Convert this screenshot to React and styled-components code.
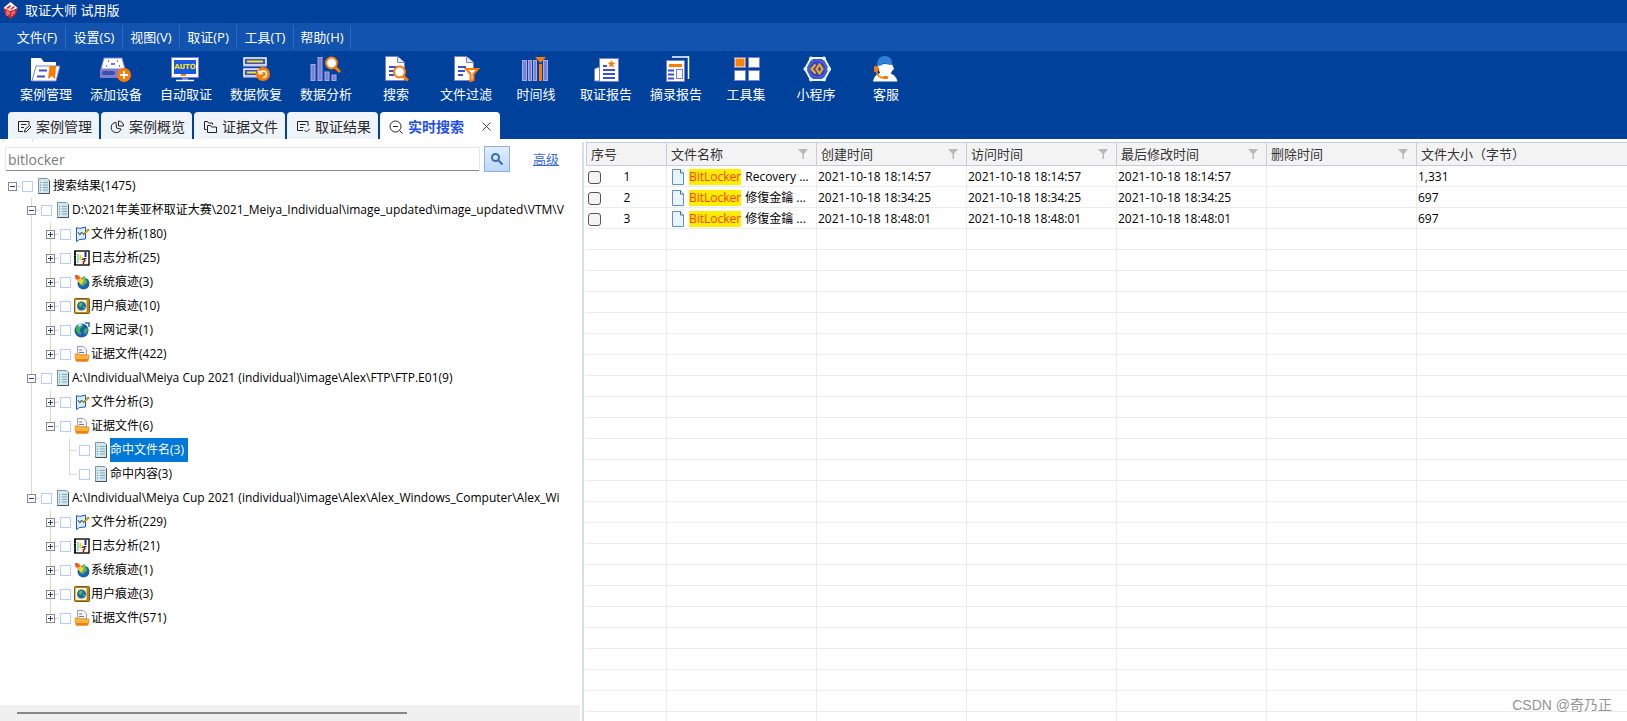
import React from "react";
import styled, { createGlobalStyle } from "styled-components";

const GlobalStyle = createGlobalStyle`
  * { box-sizing: border-box; }
  html, body { margin: 0; padding: 0; }
  body, button, input {
    font-family: "Open Sans", "Noto Sans CJK SC", sans-serif;
  }
  button { border: 0; padding: 0; background: none; color: inherit; cursor: pointer; }
  svg { display: block; flex: none; }
`;

const Shell = styled.div`
  display: flex;
  flex-direction: column;
  height: 100vh;
  overflow: hidden;
  background: #fff;
  color: #000;
`;

/* ---------- header ---------- */

const TitleBar = styled.header`
  display: flex;
  align-items: center;
  gap: 7px;
  flex: none;
  height: 23px;
  padding: 0 0 3px 3px;
  background: #00419c;
  color: #fff;
  font-size: 13px;
  line-height: 20px;
`;

const MenuBar = styled.nav`
  display: flex;
  flex: none;
  height: 28px;
  padding: 2px 0 2px 9px;
  background: #1153ae;
`;

const MenuItem = styled.button`
  width: 57px;
  flex: none;
  border-right: 1px solid #2b68be;
  color: #fff;
  font-size: 13px;
  line-height: 20px;
`;

const Ribbon = styled.div`
  display: flex;
  flex: none;
  height: 61px;
  padding: 4px 0 0 11px;
  background: #00419c;
`;

const RibbonButton = styled.button`
  display: flex;
  flex-direction: column;
  align-items: center;
  gap: 1px;
  width: 70px;
  flex: none;
  color: #fff;
  font-size: 13px;
  line-height: 20px;
`;

const TabStrip = styled.div`
  display: flex;
  gap: 2px;
  flex: none;
  height: 27px;
  padding-left: 8px;
  background: #00419c;
`;

const Tab = styled.div`
  display: flex;
  align-items: center;
  flex: none;
  width: ${(p) => (p.$active ? 120 : 91)}px;
  padding: 2px 9px 0;
  border-radius: 4px 4px 0 0;
  background: ${(p) => (p.$active ? "#fff" : "#eff3fa")};
  color: ${(p) => (p.$active ? "#1d4ff0" : "#2a2a2a")};
`;

const TabLabel = styled.button`
  display: flex;
  align-items: center;
  gap: 5px;
  flex: 1;
  font-size: 14px;
  line-height: 20px;
  font-weight: ${(p) => (p.$active ? 700 : 400)};
  white-space: nowrap;
`;

const IconButton = styled.button`
  display: flex;
`;

/* ---------- left pane ---------- */

const Main = styled.main`
  display: flex;
  flex: 1;
  min-height: 0;
`;

const SidePane = styled.aside`
  display: flex;
  flex-direction: column;
  flex: none;
  width: 580px;
  min-height: 0;
`;

const PaneTicks = styled.div`
  flex: none;
  width: 30px;
  height: 3px;
  margin-left: 3px;
  border: solid #d8dcec;
  border-width: 0 1px;
`;

const SearchBar = styled.form`
  display: flex;
  align-items: center;
  flex: none;
  height: 32px;
  padding: 2px 0 0 5px;
`;

const SearchInput = styled.input`
  width: 475px;
  height: 24px;
  padding: 0 2px;
  border: 1px solid #e6e6e6;
  border-bottom-color: #868686;
  border-radius: 2px;
  color: #7a7a7a;
  font-size: 14px;
  outline: none;
`;

const SearchButton = styled.button`
  display: flex;
  align-items: center;
  justify-content: center;
  width: 26px;
  height: 26px;
  margin: 0 23px 0 4px;
  border: 1px solid #8fb0da;
  background: linear-gradient(#e0edff, #bcd8fc);
`;

const AdvancedLink = styled.a`
  color: #3a6bd6;
  font-size: 13px;
  line-height: 20px;
`;

const Tree = styled.ul`
  flex: 1;
  min-height: 0;
  margin: 0;
  padding: 0 0 0 3px;
  overflow: hidden;
  list-style: none;
`;

const TreeRow = styled.li`
  display: flex;
  align-items: center;
  height: 24px;
  font-size: 12px;
  line-height: 24px;
  white-space: nowrap;
`;

const Guide = styled.span`
  flex: none;
  align-self: ${(p) => (p.$line === "half" ? "flex-start" : "stretch")};
  display: flex;
  align-items: ${(p) => (p.$line === "half" ? "flex-end" : "center")};
  width: 19px;
  height: ${(p) => (p.$line === "half" ? 13 : 24)}px;
  background: ${(p) =>
    p.$line ? "linear-gradient(#d9d9d9, #d9d9d9) 9px 0 / 1px 100% no-repeat" : "none"};
  &::after {
    content: "";
    width: ${(p) => (p.$stub ? 8 : 0)}px;
    height: 1px;
    margin-left: 9px;
    background: #d9d9d9;
  }
`;

const ToggleCell = styled.span`
  display: flex;
  align-items: center;
  flex: none;
  width: 19px;
  height: 24px;
  padding-left: 5px;
  background: ${(p) =>
    p.$line
      ? `linear-gradient(#d9d9d9, #d9d9d9) 9px 0 / 1px ${p.$line === "half" ? "50%" : "100%"} no-repeat`
      : "none"};
  &::after {
    content: "";
    width: 4px;
    height: 1px;
    background: #d9d9d9;
  }
`;

const Toggle = styled.button`
  width: 9px;
  height: 9px;
  flex: none;
  background: #fff;
`;

const TreeCheck = styled.input`
  appearance: none;
  flex: none;
  width: 11px;
  height: 11px;
  margin: 0 2px 0 0;
  border: 1px solid #b4ccff;
  background: #fff;
`;

const TreeLabel = styled.label`
  display: flex;
  align-items: center;
  gap: 1px;
`;

const NodeText = styled.span`
  padding-right: 4px;
  background: ${(p) => (p.$selected ? "#0078d7" : "transparent")};
  color: ${(p) => (p.$selected ? "#fff" : "#000")};
`;

const ScrollTrack = styled.div`
  flex: none;
  height: 16px;
  padding: 7px 173px 7px 17px;
  background: #f0f0f0;
`;

const ScrollThumb = styled.div`
  height: 2px;
  background: #888;
`;

const Divider = styled.div`
  flex: none;
  width: 2px;
  margin: 3px 2px 0;
  background: #d6deee;
`;

/* ---------- result table ---------- */

const TablePane = styled.section`
  flex: 1;
  min-width: 0;
  padding-top: 3px;
  overflow: hidden;
`;

const ResultTable = styled.table`
  width: 100%;
  table-layout: fixed;
  border-collapse: separate;
  border-spacing: 0;
`;

const Col = styled.col`
  width: ${(p) => p.$width};
`;

const HeadCell = styled.th`
  height: 24px;
  padding: 0 8px 1px 4px;
  border: solid #c9cbdd;
  border-width: 1px 1px 1px 0;
  background: #f3f3f3;
  color: #333;
  font-size: 13px;
  font-weight: 400;
  line-height: 20px;
  text-align: left;
  &:first-child { border-left-width: 1px; }
  &:last-child { border-right-width: 0; }
`;

const HeadContent = styled.div`
  display: flex;
  align-items: center;
  justify-content: space-between;
`;

const Cell = styled.td`
  height: 21px;
  padding: 2px 1px 0;
  border: solid #ececec;
  border-width: 0 1px 1px 0;
  font-size: 12px;
  line-height: 16px;
  white-space: nowrap;
  &:last-child { border-right-width: 0; }
`;

const IndexLabel = styled.label`
  display: flex;
  align-items: center;
  padding-left: 1px;
`;

const RowCheck = styled.input`
  appearance: none;
  width: 13px;
  height: 13px;
  margin: 0;
  border: 1px solid #555;
  border-radius: 3px;
  background: #f4f4f4;
`;

const RowNumber = styled.span`
  flex: 1;
  padding-right: 12px;
  text-align: center;
`;

const FileName = styled.div`
  display: flex;
  align-items: center;
  gap: 4px;
  padding-left: 3px;
`;

const Hit = styled.mark`
  background: #ffee00;
  color: #ff3a1c;
`;

const Watermark = styled.div`
  position: absolute;
  right: 15px;
  bottom: 5px;
  color: #949494;
  font-family: "Liberation Sans", "Noto Sans CJK SC", sans-serif;
  font-size: 14px;
  line-height: 22px;
`;

/* ---------- drawings ---------- */

const P = "#7b80d2";
const B = "#3b4fd0";
const O = "#ff7a00";

const Sheet = ({ x }) => (
  <g transform={`translate(${x} 0)`}>
    <path d="M.5 1.5h12l7 6v18h-19z" fill="#fff" stroke={P} />
    <path d="M12.5 1.5v6h7" fill="#e4e6fa" stroke={P} />
    <path d="M4 12h8M4 16h7M4 20h5" stroke={B} strokeWidth="2" />
  </g>
);

const ribbonArt = {
  case: (
    <>
      <path d="M1 26V3h10l3 4h12v6l-3 13z" fill="#fff" />
      <path d="M6 11h24l-4 15H2z" fill="#fff" stroke={P} />
      <path d="M9 15.5h8M7 21.5h8" stroke={B} strokeWidth="2" />
      <path d="M19.500 11h6.500l-1 13-3-3-4 3z" fill={O} />
    </>
  ),
  device: (
    <>
      <path d="M4 3h18l3 11H1z" fill="#fff" stroke={P} />
      <path d="M8 6h1M17 6h1M6 11h1M19 11h1M11 9h4" stroke={B} strokeWidth="1.500" />
      <rect x="0" y="14" width="25" height="9" fill={P} />
      <rect x="2" y="16" width="13" height="4" rx="2" fill="#3c4fae" />
      <circle cx="24" cy="20" r="7" fill={O} />
      <path d="M24 16v8M20 20h8" stroke="#fff" strokeWidth="2" />
    </>
  ),
  auto: (
    <>
      <rect x="1.500" y="2.500" width="27" height="20" fill="#fff" stroke={P} />
      <rect x="4" y="5" width="22" height="14" fill="#1758e6" />
      <text x="15" y="14" textAnchor="middle" fontSize="7" fontWeight="700" fontFamily="DejaVu Sans" fill="#ffe600">AUTO</text>
      <rect x="11" y="19" width="5" height="2" fill={O} />
      <path d="M12 23h6v2h-6z" fill={P} />
      <path d="M6 25.500h18" stroke="#fff" strokeWidth="1.500" />
    </>
  ),
  restore: (
    <>
      <rect x="4" y="3" width="22" height="7" fill={B} stroke="#fff" strokeWidth="1.500" />
      <path d="M7 6.500h16" stroke="#ffe600" strokeWidth="2" />
      <rect x="4" y="14" width="16" height="7" fill={B} stroke="#fff" strokeWidth="1.500" />
      <path d="M7 17.500h9" stroke="#ffe600" strokeWidth="2" />
      <path d="M3 11.500h24M3 22.500h14" stroke={P} />
      <circle cx="23" cy="19" r="7" fill={O} />
      <path d="M19.500 18.500c1-3.500 7-3.500 7 .500 0 2-1.500 3.500-3.500 3.500M18.500 15.500l1 3.500 3.500-1" fill="none" stroke="#fff" strokeWidth="1.500" />
    </>
  ),
  analyse: (
    <>
      <g fill={P} stroke="#a5a9e8">
        <rect x="1" y="9.500" width="4" height="16" />
        <rect x="8" y="2.500" width="4" height="23" />
        <rect x="15" y="17" width="4" height="8.500" />
        <rect x="22" y="20" width="4" height="5.500" />
      </g>
      <path d="M25 12l5 5" stroke={O} strokeWidth="3" />
      <circle cx="21.500" cy="8" r="5.500" fill="#fff" stroke={O} strokeWidth="2" />
    </>
  ),
  search: (
    <>
      <Sheet x={5} />
      <path d="M23 21l5 4.500" stroke={O} strokeWidth="3" />
      <circle cx="19.500" cy="17" r="5.500" fill="#fff" stroke={O} strokeWidth="2" />
    </>
  ),
  filter: (
    <>
      <Sheet x={4} />
      <path d="M16 14h12l-4.500 5v6l-3 1v-7z" fill="#fff" stroke={O} strokeWidth="2" />
    </>
  ),
  timeline: (
    <>
      <g fill={P} stroke="#a9adea">
        <rect x="2.500" y="5.500" width="4" height="20" />
        <rect x="8.500" y="5.500" width="3" height="20" />
        <rect x="13.500" y="5.500" width="3" height="20" />
        <rect x="23.500" y="5.500" width="4" height="20" />
      </g>
      <path d="M19 9h3v17h-3zM15 2h11l-5.500 6z" fill={O} />
    </>
  ),
  report: (
    <>
      <path d="M4.500 26V14l3-1.500H10V26z" fill="#fff" stroke={P} />
      <rect x="9.500" y="3.500" width="19" height="23" fill="#fff" stroke={P} />
      <path d="M21.500 5l1 2.500 3 .300-2.300 1.800.800 2.900-2.500-1.600-2.500 1.600.800-2.900-2.300-1.800 3-.300z" fill={O} />
      <path d="M13 11h4M13 15h12M13 19h12M13 23h12" stroke={B} strokeWidth="2" />
    </>
  ),
  excerpt: (
    <>
      <path d="M12 2h16.500v22" fill="none" stroke="#fff" strokeWidth="1.500" />
      <rect x="6.500" y="5.500" width="18" height="21" fill="#fff" stroke={P} />
      <rect x="9" y="9" width="13" height="3" fill={O} />
      <path d="M8 15.500h6M8 19.500h6M8 23.500h6" stroke={B} strokeWidth="2" />
      <rect x="16.500" y="14.500" width="6" height="9" fill="#f6f6ff" stroke={P} />
    </>
  ),
  tools: (
    <g fill="#fff" stroke={P}>
      <rect x="4.500" y="2.500" width="11" height="10" />
      <rect x="18.500" y="2.500" width="11" height="10" />
      <rect x="4.500" y="15.500" width="11" height="10" />
      <rect x="18.500" y="15.500" width="11" height="10" />
      <rect x="6" y="4" width="8" height="7" fill="#ff8400" stroke={O} />
    </g>
  ),
  mini: (
    <>
      <path d="M11 3h13l6 11-6 11H11L5 14z" fill={B} stroke="#eefaff" strokeWidth="2" />
      <g fill="#dff6ff">
        <circle cx="11" cy="3.500" r="2" /><circle cx="24" cy="3.500" r="2" />
        <circle cx="5.500" cy="14" r="2" /><circle cx="29" cy="14" r="2" />
        <circle cx="11" cy="24.500" r="2" /><circle cx="24" cy="24.500" r="2" />
      </g>
      <circle cx="17.500" cy="14" r="8.500" fill="#3347c8" stroke="#5a6be0" />
      <path d="M15.500 9.500L11.500 14l4 4.500M19.500 9.500l-3 4.500 3 4.500 3-4.500z" fill="none" stroke="#ffb000" strokeWidth="2" />
    </>
  ),
  service: (
    <>
      <path d="M3 26.500c1-6 5-8 8-8.500h8c4 1 7 3 8.500 8.500z" fill="#fff" />
      <path d="M8 9h14l2 5-2 2c-1 4-5 5-7 5-4 0-7-5-7-12z" fill="#fff" />
      <path d="M7 11C7 4 10 1 15 1s8 4 7 9c-4 0-6-1-8-2-1 2-3 3-7 3z" fill="#2f7fd6" />
      <rect x="4" y="11" width="4" height="6" rx="1" fill={O} />
      <path d="M6.500 17c1 4 4 6 8 6" fill="none" stroke={O} strokeWidth="1.500" />
      <rect x="13" y="21" width="5" height="3" rx="1" fill={O} />
    </>
  ),
};

const tabArt = {
  edit: <path d="M12 5V1.500H1.500v10H6M4 4.500h5.500M4 7.500h3M7.500 12l.500-2.500 4.500-4 1.500 1.500-4.500 4.500z" />,
  pie: <path d="M6 2.500A5 5 0 1 0 11 9L6.500 8zM8.500 1v5h5c0-3-2-5-5-5z" />,
  folders: <path d="M3.500 9.500h-2v-8h3l1 1.500h4v1.500M4.500 12.500v-7h3l1 1.500h5v5.500z" />,
  result: <path d="M12 6V1.500H1.500v9H7M4 4.500h5.500M4 7.500h3.500M8.500 10l2 2 3.500-3.500" />,
  zoom: (
    <>
      <circle cx="6.500" cy="6.500" r="5.500" />
      <path d="M10.500 10.500l3 3M4 6.500h5" />
    </>
  ),
};

const nodeArt = {
  doc: (
    <>
      <path d="M2.500.500h9l2 2v13h-11z" fill="#d0e6f0" stroke="#8097a5" />
      <path d="M13.500 2.500v13h-11" fill="none" stroke="#43535f" />
      <path d="M7 4.500h5M7 7h5M7 9.500h5M7 12h5" stroke="#88a8b8" />
      <path d="M4.500 4v9" stroke="#55a860" strokeDasharray="1 1.500" />
    </>
  ),
  file: (
    <>
      <path d="M2.500 1.500l3 1 6-1.500v12l-6 .500-3 2z" fill="#d8eeff" stroke="#1c5eb0" />
      <path d="M4 6l2 3 1.500-3 2 2.500L14 4" fill="none" stroke="#3a4a30" />
      <path d="M9 8l5-5 1.500 1L11 8z" fill="#e8b020" stroke="#7a4a10" strokeWidth=".500" />
    </>
  ),
  log: (
    <>
      <rect x="1" y="1" width="14" height="14" fill="#fffce8" stroke="#1c1a10" strokeWidth="1.500" />
      <path d="M1 1v14" stroke="#000" strokeWidth="2" strokeDasharray="1.500 1" />
      <path d="M4 4v9" stroke="#7fe0f0" strokeWidth="2" />
      <path d="M6.500 5v5" stroke="#f0d020" strokeWidth="2" />
      <path d="M11.500 2v5M11.500 8v1" stroke="#1028d0" strokeWidth="2" />
      <path d="M8.500 10c0-2 3.500-1 2 1l-1 1v2" fill="none" stroke="#901020" strokeWidth="1.500" />
    </>
  ),
  system: (
    <>
      <circle cx="9.500" cy="9.500" r="6" fill="#1b62b8" />
      <path d="M7 5c3-1 6 0 6 3 0 2-3 1-3 4-2 1-5-3-5-5z" fill="#58b840" />
      <path d="M1 1l3 0 3 3-3 3-3-3z" fill="#f0602a" />
      <path d="M3 6l4-2 3 3-3 4z" fill="#f4d030" />
      <path d="M8 3l3-1 1 3-3 1z" fill="#7cc848" />
    </>
  ),
  user: (
    <>
      <rect x=".500" y=".500" width="15" height="15" rx="1" fill="#b8861c" stroke="#7d5a10" />
      <rect x="1.500" y="2" width="11" height="12" fill="#fff6c8" />
      <circle cx="7.500" cy="8" r="4.500" fill="#1c64b4" />
      <path d="M5 6c2-2 4-1 4 0s-2 1-2 3c-1 0-3-1-2-3zM9 8l2 1-2 2z" fill="#58bc50" />
    </>
  ),
  web: (
    <>
      <circle cx="7.500" cy="8.500" r="7" fill="#1a5cb8" />
      <path d="M2 5c2-3 6-4 7-2s-3 2-3 5 2 2 1 5c-3-1-6-4-5-8zM10 7l4-1-1 5-3 1z" fill="#3fb254" />
      <path d="M4 3c2-2 4-1 4 0L5 5z" fill="#b9e8f8" />
      <path d="M11 1h4v4" fill="none" stroke="#2a6a9c" strokeWidth="1.500" />
    </>
  ),
  folder: (
    <>
      <path d="M3.500 9V.500h6l3 3V9z" fill="#f4f4fc" stroke="#9a9ab0" />
      <path d="M5 4h3M5 6.500h5" stroke="#777" />
      <path d="M1 8h4l1 1h9l-1 6H2z" fill="#ffb43c" stroke="#f0922a" />
      <path d="M2 13h12l-.500 2.500h-11z" fill="#f08010" />
    </>
  ),
};

const RibbonIcon = ({ name }) => (
  <svg width="32" height="28" viewBox="0 0 32 28" aria-hidden="true">{ribbonArt[name]}</svg>
);

const TabIcon = ({ name }) => (
  <svg width="14" height="14" viewBox="0 0 14 14" fill="none" stroke="#222" aria-hidden="true">{tabArt[name]}</svg>
);

const NodeIcon = ({ name }) => (
  <svg width="16" height="16" viewBox="0 0 16 16" aria-hidden="true">{nodeArt[name]}</svg>
);

const AppLogo = () => (
  <svg width="15" height="17" viewBox="0 0 15 17" aria-hidden="true">
    <path d="M7.500 0L14.500 6 13 12 7.500 17 2 12 .500 6z" fill="#d8222a" />
    <path d="M7.500 0L14.500 6 7.500 9 .500 6z" fill="#fff" />
    <path d="M3 6l4-3 1 1-3 3zM7 7l4-3 1 1-4 3z" fill="#d8222a" />
    <path d="M4 14V9l2 1v3M9 14v-3l2-2v3" fill="none" stroke="#f4a0a0" />
  </svg>
);

const Funnel = () => (
  <svg width="10" height="10" viewBox="0 0 10 10" aria-hidden="true">
    <path d="M0 0h10L6 5v5H4.500V5z" fill="#b9b9b9" />
  </svg>
);

const FilePage = () => (
  <svg width="14" height="16" viewBox="0 0 14 16" aria-hidden="true">
    <path d="M1.500.500h8l3 3.500v11.500h-11z" fill="#e9f4ff" stroke="#5b92cc" />
    <path d="M9.500.500V4h3" fill="#fff" stroke="#3f6a99" />
  </svg>
);

/* ---------- data ---------- */

const menus = ["文件(F)", "设置(S)", "视图(V)", "取证(P)", "工具(T)", "帮助(H)"];

const ribbon = [
  ["case", "案例管理"], ["device", "添加设备"], ["auto", "自动取证"], ["restore", "数据恢复"],
  ["analyse", "数据分析"], ["search", "搜索"], ["filter", "文件过滤"], ["timeline", "时间线"],
  ["report", "取证报告"], ["excerpt", "摘录报告"], ["tools", "工具集"], ["mini", "小程序"],
  ["service", "客服"],
];

const tabs = [
  ["edit", "案例管理"], ["pie", "案例概览"], ["folders", "证据文件"],
  ["result", "取证结果"], ["zoom", "实时搜索"],
];

// guides: one entry per ancestor column; line: the connector through the node's own column.
const nodes = [
  { icon: "doc", text: "搜索结果(1475)", open: true, guides: [], line: null },
  { icon: "doc", text: "D:\\2021年美亚杯取证大赛\\2021_Meiya_Individual\\image_updated\\image_updated\\VTM\\V", open: true, guides: [null], line: "full" },
  { icon: "file", text: "文件分析(180)", guides: [null, "full"], line: "full" },
  { icon: "log", text: "日志分析(25)", guides: [null, "full"], line: "full" },
  { icon: "system", text: "系统痕迹(3)", guides: [null, "full"], line: "full" },
  { icon: "user", text: "用户痕迹(10)", guides: [null, "full"], line: "full" },
  { icon: "web", text: "上网记录(1)", guides: [null, "full"], line: "full" },
  { icon: "folder", text: "证据文件(422)", guides: [null, "full"], line: "half" },
  { icon: "doc", text: "A:\\Individual\\Meiya Cup 2021 (individual)\\image\\Alex\\FTP\\FTP.E01(9)", open: true, guides: [null], line: "full" },
  { icon: "file", text: "文件分析(3)", guides: [null, "full"], line: "full" },
  { icon: "folder", text: "证据文件(6)", open: true, guides: [null, "full"], line: "half" },
  { icon: "doc", text: "命中文件名(3)", leaf: true, selected: true, guides: [null, "full", null], line: "full" },
  { icon: "doc", text: "命中内容(3)", leaf: true, guides: [null, "full", null], line: "half" },
  { icon: "doc", text: "A:\\Individual\\Meiya Cup 2021 (individual)\\image\\Alex\\Alex_Windows_Computer\\Alex_Wi", open: true, guides: [null], line: "half" },
  { icon: "file", text: "文件分析(229)", guides: [null, null], line: "full" },
  { icon: "log", text: "日志分析(21)", guides: [null, null], line: "full" },
  { icon: "system", text: "系统痕迹(1)", guides: [null, null], line: "full" },
  { icon: "user", text: "用户痕迹(3)", guides: [null, null], line: "full" },
  { icon: "folder", text: "证据文件(571)", guides: [null, null], line: "half" },
];

const columns = [
  { label: "序号", width: "81px" },
  { label: "文件名称", width: "150px", filter: true },
  { label: "创建时间", width: "150px", filter: true },
  { label: "访问时间", width: "150px", filter: true },
  { label: "最后修改时间", width: "150px", filter: true },
  { label: "删除时间", width: "150px", filter: true },
  { label: "文件大小（字节）", width: "auto" },
];

const files = [
  { rest: "Recovery ...", time: "2021-10-18 18:14:57", size: "1,331" },
  { rest: "修復金鑰 ...", time: "2021-10-18 18:34:25", size: "697" },
  { rest: "修復金鑰 ...", time: "2021-10-18 18:48:01", size: "697" },
];

const blankRows = Array.from({ length: 24 }, (_, i) => i);

function TreeNode({ node }) {
  return (
    <TreeRow>
      {node.guides.map((g, i) => <Guide key={i} $line={g} />)}
      {node.leaf ? (
        <Guide $line={node.line} $stub />
      ) : (
        <ToggleCell $line={node.line}>
          <Toggle type="button" aria-label={node.open ? "收起" : "展开"}>
            <svg width="9" height="9" viewBox="0 0 9 9">
              <rect x=".5" y=".5" width="8" height="8" fill="#fff" stroke="#8a8a8a" />
              <path d={node.open ? "M2 4.500h5" : "M2 4.500h5M4.500 2v5"} stroke="#26437f" />
            </svg>
          </Toggle>
        </ToggleCell>
      )}
      <TreeLabel>
        <TreeCheck type="checkbox" />
        <NodeIcon name={node.icon} />
        <NodeText $selected={node.selected}>{node.text}</NodeText>
      </TreeLabel>
    </TreeRow>
  );
}

export default function App() {
  return (
    <Shell>
      <GlobalStyle />
      <TitleBar><AppLogo />取证大师 试用版</TitleBar>
      <MenuBar>
        {menus.map((m) => <MenuItem key={m} type="button">{m}</MenuItem>)}
      </MenuBar>
      <Ribbon>
        {ribbon.map(([icon, label]) => (
          <RibbonButton key={icon} type="button"><RibbonIcon name={icon} />{label}</RibbonButton>
        ))}
      </Ribbon>
      <TabStrip>
        {tabs.map(([icon, label]) => {
          const active = icon === "zoom";
          return (
            <Tab key={icon} $active={active}>
              <TabLabel type="button" $active={active}><TabIcon name={icon} />{label}</TabLabel>
              {active && (
                <IconButton type="button" aria-label="关闭">
                  <svg width="9" height="9" viewBox="0 0 9 9">
                    <path d="M.5.5l8 8M8.500.5l-8 8" stroke="#444" />
                  </svg>
                </IconButton>
              )}
            </Tab>
          );
        })}
      </TabStrip>
      <Main>
        <SidePane>
          <PaneTicks />
          <SearchBar onSubmit={(e) => e.preventDefault()}>
            <SearchInput type="text" aria-label="搜索" defaultValue="bitlocker" />
            <SearchButton type="submit" aria-label="搜索">
              <svg width="12" height="12" viewBox="0 0 12 12" fill="none" stroke="#3f6cab" strokeWidth="2">
                <circle cx="4.500" cy="4.500" r="3.500" />
                <path d="M7 7l4.500 4.500" />
              </svg>
            </SearchButton>
            <AdvancedLink href="#advanced">高级</AdvancedLink>
          </SearchBar>
          <Tree>
            {nodes.map((n, i) => <TreeNode key={i} node={n} />)}
          </Tree>
          <ScrollTrack><ScrollThumb /></ScrollTrack>
        </SidePane>
        <Divider />
        <TablePane>
          <ResultTable>
            <colgroup>
              {columns.map((c) => <Col key={c.label} $width={c.width} />)}
            </colgroup>
            <thead>
              <tr>
                {columns.map((c) => (
                  <HeadCell key={c.label}>
                    <HeadContent>{c.label}{c.filter && <Funnel />}</HeadContent>
                  </HeadCell>
                ))}
              </tr>
            </thead>
            <tbody>
              {files.map((f, i) => (
                <tr key={f.time}>
                  <Cell>
                    <IndexLabel><RowCheck type="checkbox" /><RowNumber>{i + 1}</RowNumber></IndexLabel>
                  </Cell>
                  <Cell>
                    <FileName><FilePage /><Hit>BitLocker</Hit><span>{f.rest}</span></FileName>
                  </Cell>
                  <Cell>{f.time}</Cell>
                  <Cell>{f.time}</Cell>
                  <Cell>{f.time}</Cell>
                  <Cell />
                  <Cell>{f.size}</Cell>
                </tr>
              ))}
              {blankRows.map((r) => (
                <tr key={r}>{columns.map((c) => <Cell key={c.label} />)}</tr>
              ))}
            </tbody>
          </ResultTable>
        </TablePane>
      </Main>
      <Watermark>CSDN @奇乃正</Watermark>
    </Shell>
  );
}
